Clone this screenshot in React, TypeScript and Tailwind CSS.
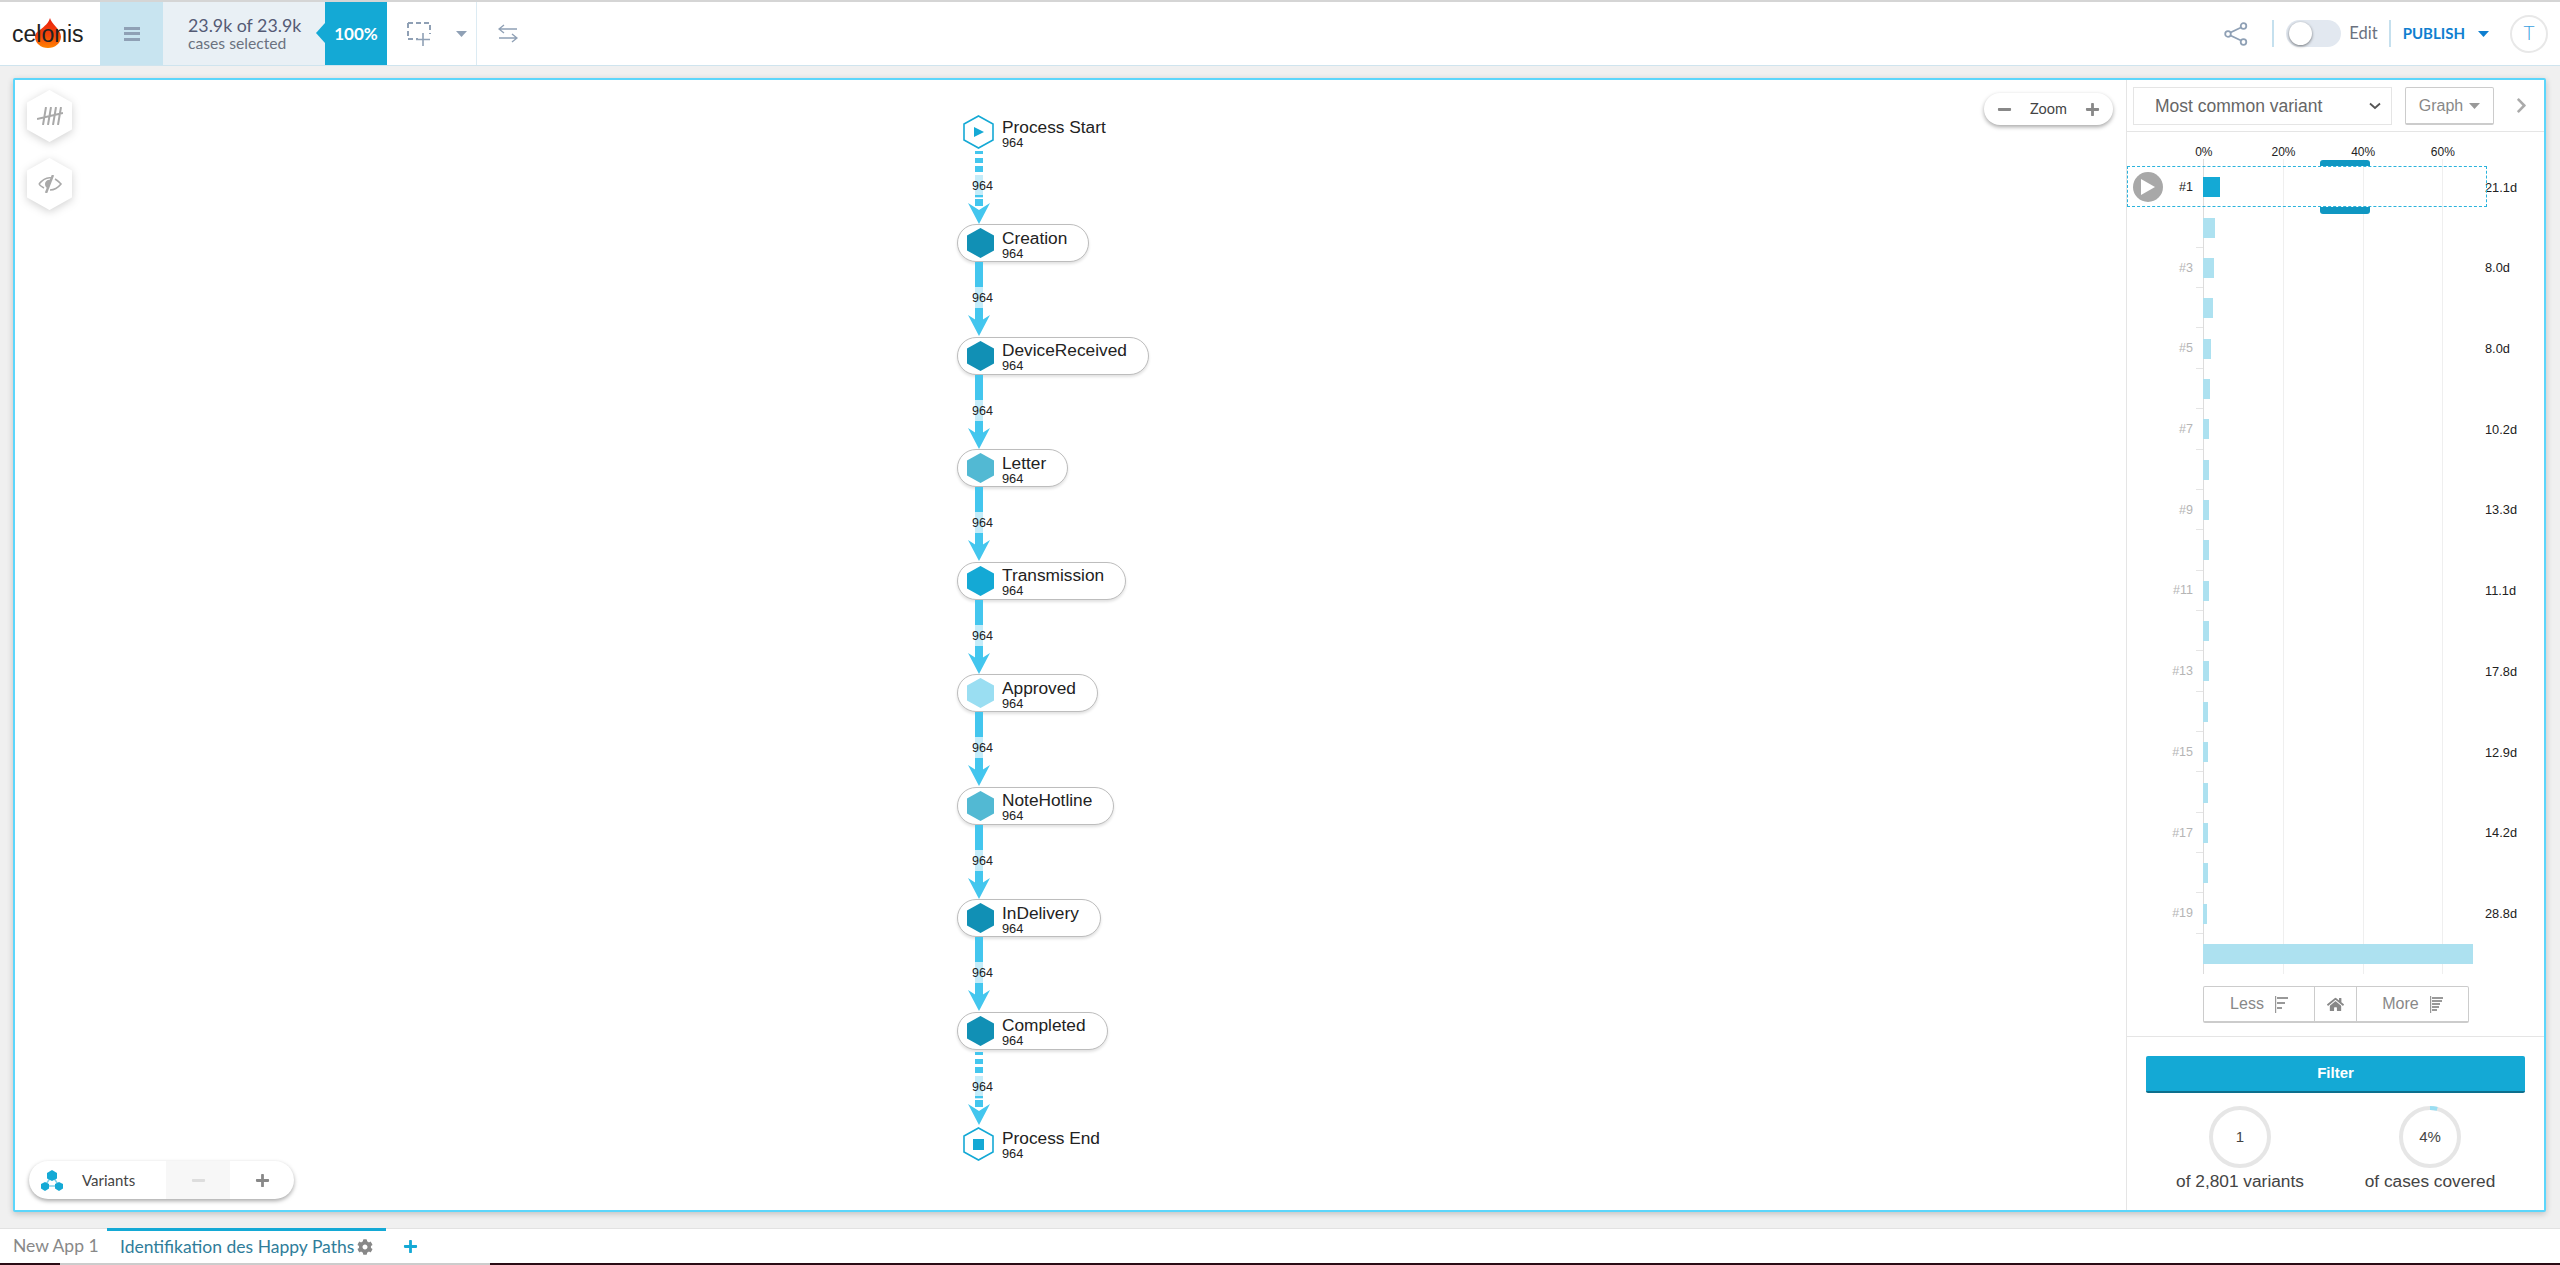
import { FaChevronRight, FaCog, FaHome, FaMinus, FaPlus } from "react-icons/fa";

const hexPoints = "13.5,0 27,7.5 27,22.5 13.5,30 0,22.5 0,7.5";

const steps = [
  { name: "Creation", color: "#1190b5" },
  { name: "DeviceReceived", color: "#1190b5" },
  { name: "Letter", color: "#52b9d3" },
  { name: "Transmission", color: "#14a9d5" },
  { name: "Approved", color: "#9adef2" },
  { name: "NoteHotline", color: "#52b9d3" },
  { name: "InDelivery", color: "#1190b5" },
  { name: "Completed", color: "#1190b5" },
];

const bars = [17, 12, 11, 10, 8, 7, 6, 6, 6, 6, 6, 6, 6, 5, 5, 5, 5, 5, 4, 270];
const durations: Record<number, string> = {
  1: "21.1d",
  3: "8.0d",
  5: "8.0d",
  7: "10.2d",
  9: "13.3d",
  11: "11.1d",
  13: "17.8d",
  15: "12.9d",
  17: "14.2d",
  19: "28.8d",
};

function Edge(props: { dashed?: boolean; height: string }) {
  return (
    <div className={`relative w-[44px] ${props.height}`}>
      <svg width="44" height="78" className="absolute top-0 left-0">
        {props.dashed ? (
          <>
            <rect x="18" y="2" width="8" height="3" fill="#43c6ee" />
            <rect x="18" y="9" width="8" height="5" fill="#43c6ee" />
            <rect x="18" y="17" width="8" height="6" fill="#43c6ee" />
            <rect x="18" y="26" width="8" height="23" fill="#c5ecf9" />
            <rect x="18" y="46" width="8" height="2" fill="#43c6ee" />
            <rect x="18" y="50" width="8" height="7" fill="#43c6ee" />
            <polygon points="11,54 22,61 33,54 22,75" fill="#43c6ee" />
          </>
        ) : (
          <>
            <rect x="18" y="0" width="8" height="60" fill="#43c6ee" />
            <rect x="18" y="25" width="8" height="21" fill="#c5ecf9" />
            <polygon points="11,53 22,60 33,53 22,74" fill="#43c6ee" />
          </>
        )}
      </svg>
      <span
        className={`absolute left-[15px] text-[12.5px] leading-[14px] text-[#222] ${
          props.dashed ? "top-[30px]" : "top-[29px]"
        }`}
      >
        964
      </span>
    </div>
  );
}

function NodeLabel(props: { name: string }) {
  return (
    <div className="ml-[8px] flex flex-col">
      <span className="text-[17.3px] leading-[18px] text-[#222]">{props.name}</span>
      <span className="mt-[1px] h-[10px] text-[12.8px] leading-[12px] text-[#222]">964</span>
    </div>
  );
}

function StepNode(props: { name: string; color: string }) {
  return (
    <div className="flex h-[38px] w-fit items-center rounded-full border border-[#bdbdbd] bg-white pl-[9px] pr-[21px] shadow-[0_2px_3px_rgba(0,0,0,0.12)]">
      <svg width="27" height="30" viewBox="0 0 27 30">
        <polygon points={hexPoints} fill={props.color} />
      </svg>
      <NodeLabel name={props.name} />
    </div>
  );
}

function ProcessNode(props: { name: string; end?: boolean }) {
  return (
    <div className="ml-[6px] flex h-[34px] items-center">
      <svg width="31" height="34" viewBox="0 0 31 34">
        <polygon
          points="15.5,1 30,9 30,25 15.5,33 1,25 1,9"
          fill="white"
          stroke="#14a9d5"
          strokeWidth="1.6"
        />
        {props.end ? (
          <rect x="10" y="12" width="11" height="11" fill="#14a9d5" />
        ) : (
          <polygon points="11,12 21,17 11,22" fill="#14a9d5" />
        )}
      </svg>
      <NodeLabel name={props.name} />
    </div>
  );
}

function HexButton(props: { children: React.ReactNode }) {
  return (
    <div className="relative h-[52px] w-[45px] drop-shadow-[0_2px_4px_rgba(0,0,0,0.18)]">
      <svg width="45" height="52" viewBox="0 0 45 52" className="absolute inset-0">
        <polygon
          points="22.5,1 44,13 44,39 22.5,51 1,39 1,13"
          fill="white"
          stroke="white"
          strokeWidth="2"
          strokeLinejoin="round"
        />
      </svg>
      <div className="absolute inset-0 flex items-center justify-center">{props.children}</div>
    </div>
  );
}

function BarsIcon(props: { more?: boolean }) {
  const widths = props.more ? [11, 10, 8, 7, 5] : [11, 8, 5];
  const gap = props.more ? 3 : 5;
  return (
    <svg width="13" height="17" viewBox="0 0 13 17">
      <rect x="0" y="0" width="1.2" height="17" fill="#999" />
      {widths.map((w, i) => (
        <rect key={i} x="2" y={1 + i * gap} width={w} height="2" fill="#999" />
      ))}
    </svg>
  );
}

function Ring(props: { value: string; caption: string; arc?: boolean }) {
  return (
    <div className="flex w-[190px] flex-col items-center">
      <div className="relative h-[64px] w-[64px]">
        <svg width="64" height="64" viewBox="0 0 64 64">
          <circle cx="32" cy="32" r="29" fill="none" stroke="#e6e6e6" strokeWidth="4" />
          {props.arc && (
            <circle
              cx="32"
              cy="32"
              r="29"
              fill="none"
              stroke="#9adef2"
              strokeWidth="4"
              strokeDasharray="7.3 175"
              transform="rotate(-90 32 32)"
            />
          )}
        </svg>
        <span className="absolute inset-0 flex items-center justify-center text-[15px] text-[#444]">
          {props.value}
        </span>
      </div>
      <span className="text-[17.3px] leading-[24px] text-[#444]">{props.caption}</span>
    </div>
  );
}

function Sidebar() {
  return (
    <div className="flex w-[418px] shrink-0 flex-col border-l border-[#e5e5e5]">
      <div className="flex h-[52px] items-start border-b border-[#e5e5e5] pt-[7px]">
        <div className="ml-[6px] flex h-[38px] w-[259px] items-center justify-between border border-[#e5e5e5] pl-[21px] pr-[10px] text-[17.5px] text-[#666]">
          Most common variant
          <svg width="12" height="8" viewBox="0 0 12 8">
            <path d="M1 1.5 L6 6 L11 1.5" fill="none" stroke="#555" strokeWidth="1.8" />
          </svg>
        </div>
        <div className="ml-[13px] flex h-[38px] w-[89px] items-center justify-center gap-[6px] rounded-[2px] border border-b-2 border-[#ccc] text-[16px] text-[#888]">
          Graph
          <svg width="11" height="6" viewBox="0 0 11 6">
            <polygon points="0,0 11,0 5.5,6" fill="#999" />
          </svg>
        </div>
        <FaChevronRight className="ml-[19px] mt-[10px] text-[17px] text-[#aaa]" />
      </div>

      <div className="relative">
        <div className="flex h-[35px] items-center pl-[37px] pt-[4px] text-[12px] text-[#222]">
          {["0%", "20%", "40%", "60%"].map((tick) => (
            <span key={tick} className="w-[79.67px] text-center">
              {tick}
            </span>
          ))}
        </div>

        {/* grid lines behind the rows */}
        <div className="absolute bottom-0 left-[76px] top-[27px] w-px bg-[#dcdcdc]" />
        <div className="absolute bottom-0 left-[156px] top-[27px] w-px bg-[#efefef]" />
        <div className="absolute bottom-0 left-[236px] top-[27px] w-px bg-[#efefef]" />
        <div className="absolute bottom-0 left-[315px] top-[27px] w-px bg-[#efefef]" />

        <div className="relative flex flex-col">
          {bars.map((width, i) => {
            const row = i + 1;
            return (
              <div key={row} className="relative flex h-[40.37px] items-center">
                <div className="w-[76px] pr-[10px] text-right text-[12.5px] text-[#b5b5b5]">
                  {row === 1 ? <span className="text-[#222]">#1</span> : row % 2 === 1 ? `#${row}` : ""}
                </div>
                <div className="w-[282px]">
                  <div
                    className={`h-[20px] ${row === 1 ? "bg-[#14a9d5]" : "bg-[#ade1f0]"}`}
                    style={{ width }}
                  />
                </div>
                <span className="text-[12.8px] text-[#222]">{durations[row]}</span>
                {row > 1 && row < 20 && (
                  <div className="absolute bottom-0 left-[69px] h-px w-[7px] bg-[#e5e5e5]" />
                )}
              </div>
            );
          })}

          {/* highlighted first row */}
          <div className="absolute left-0 top-[-1px] h-[41px] w-[360px] border border-dashed border-[#2bb3dc]" />
          <div className="absolute left-[193px] top-[-7px] h-[6px] w-[50px] rounded-t-[3px] bg-[#1097c2]" />
          <div className="absolute left-[193px] top-[40px] h-[7px] w-[50px] rounded-b-[3px] bg-[#1097c2]" />
          <div className="absolute left-[6px] top-[5px] flex h-[30px] w-[30px] items-center justify-center rounded-full bg-[#a8a8a8]">
            <svg width="14" height="16" viewBox="0 0 14 16">
              <polygon points="0,0 14,8 0,16" fill="white" />
            </svg>
          </div>
        </div>
      </div>

      <div className="ml-[76px] mt-[12px] flex h-[37px] w-[266px] rounded-[2px] border border-b-2 border-[#ccc] text-[16px] text-[#888]">
        <div className="flex w-[110px] items-center justify-center gap-[11px]">
          Less
          <BarsIcon />
        </div>
        <div className="flex w-[43px] items-center justify-center border-x border-[#ccc]">
          <FaHome className="text-[17px] text-[#888]" />
        </div>
        <div className="flex flex-1 items-center justify-center gap-[11px]">
          More
          <BarsIcon more />
        </div>
      </div>

      <div className="mt-[13px] flex flex-1 flex-col border-t border-[#e5e5e5] pt-[19px]">
        <div className="mx-[19px] flex h-[37px] items-center justify-center rounded-[2px] border-b-2 border-[#0d6f8d] bg-[#14a9d5] text-[15px] font-bold text-white">
          Filter
        </div>
        <div className="ml-[18px] mt-[12px] flex">
          <Ring value="1" caption="of 2,801 variants" />
          <Ring value="4%" caption="of cases covered" arc />
        </div>
      </div>
    </div>
  );
}

function GraphArea() {
  return (
    <div className="relative flex-1 pl-[942px] pt-[35px]">
      <ProcessNode name="Process Start" />
      <Edge dashed height="h-[75px]" />
      {steps.map((step, i) => (
        <div key={step.name}>
          <StepNode name={step.name} color={step.color} />
          {i < steps.length - 1 ? <Edge height="h-[74.57px]" /> : <Edge dashed height="h-[77px]" />}
        </div>
      ))}
      <ProcessNode name="Process End" end />

      <div className="absolute left-[12px] top-[10px] flex flex-col gap-[16px]">
        <HexButton>
          <svg width="26" height="18" viewBox="0 0 26 18" fill="none" stroke="#a9a9a9" strokeWidth="2">
            <path d="M9 0 L6 18 M14 0 L11 18 M19 0 L16 18 M24 0 L21 18 M0 12 L26 6" />
          </svg>
        </HexButton>
        <HexButton>
          <svg width="24" height="18" viewBox="0 0 24 18" fill="none" stroke="#a9a9a9" strokeWidth="1.6">
            <path d="M1 9 C5 4 10 2 14 3 M17 4 C19 5 21 7 23 9 C19 14 15 15 12 15 M6 13 C4 12 2 11 1 9" />
            <path d="M15 0 L8 18" strokeWidth="2.4" />
            <path d="M7 9 C7 6 10 4 13 5 L10 13 C8 13 7 11 7 9 Z" fill="#a9a9a9" stroke="none" />
          </svg>
        </HexButton>
      </div>

      <div className="absolute left-[1969px] top-[13px] flex h-[32px] w-[129px] items-center justify-between rounded-full bg-white px-[13px] font-['Lato'] text-[14.5px] text-[#444] shadow-[0_2px_4px_rgba(0,0,0,0.35)]">
        <FaMinus className="text-[15px] text-[#888]" />
        Zoom
        <FaPlus className="text-[15px] text-[#888]" />
      </div>

      <div className="absolute left-[14px] top-[1081px] flex h-[38px] w-[265px] items-center overflow-hidden rounded-full bg-white font-['Lato'] text-[15px] text-[#444] shadow-[0_2px_4px_rgba(0,0,0,0.35)]">
        <svg width="22" height="21" viewBox="0 0 22 21" className="ml-[12px]">
          <path d="M11 5 L4 16 L18 16 Z" fill="none" stroke="#7fd0ea" strokeWidth="1.5" />
          <polygon points="11,0 16,3 16,8.5 11,11 6,8.5 6,3" fill="#14a9d5" />
          <polygon points="4,12 8,14 8,18.5 4,21 0,18.5 0,14" fill="#14a9d5" />
          <polygon points="18,12 22,14 22,18.5 18,21 14,18.5 14,14" fill="#14a9d5" />
        </svg>
        <span className="ml-[19px] w-[84px]">Variants</span>
        <div className="flex h-full w-[64px] items-center justify-center bg-[#f7f7f7]">
          <FaMinus className="text-[15px] text-[#ddd]" />
        </div>
        <div className="flex h-full flex-1 items-center justify-center">
          <FaPlus className="text-[15px] text-[#888]" />
        </div>
      </div>
    </div>
  );
}

function TopBar() {
  return (
    <div className="flex h-[64px] shrink-0 items-stretch border-b border-[#cfe4ee] bg-white font-['Lato']">
      <div className="relative w-[100px]">
        <svg width="26" height="30" viewBox="0 0 26 32" preserveAspectRatio="none" className="absolute left-[35px] top-[16px]">
          <defs>
            <linearGradient id="flame" x1="0" y1="0" x2="0" y2="1">
              <stop offset="0" stopColor="#e8200c" />
              <stop offset="0.6" stopColor="#f6480a" />
              <stop offset="1" stopColor="#ff8400" />
            </linearGradient>
          </defs>
          <path d="M15 0 C16 6 26 12 26 20 C26 27 20 32 13 32 C6 32 0 27 0 20 C0 15 5 13 8 10 C11 7 13 6 15 0 Z" fill="url(#flame)" />
        </svg>
        <span className="absolute left-[12px] top-[18px] font-['Liberation_Sans'] text-[23px] leading-[28px] text-[#222]">
          celonis
        </span>
      </div>
      <div className="flex w-[63px] flex-col items-center justify-center gap-[2.5px] bg-[#c8e4f0]">
        <div className="h-[3px] w-[16px] bg-[#8fa0b5]" />
        <div className="h-[3px] w-[16px] bg-[#8fa0b5]" />
        <div className="h-[3px] w-[16px] bg-[#8fa0b5]" />
      </div>
      <div className="flex w-[162px] flex-col justify-center bg-[#e9f0f5] pl-[25px]">
        <span className="text-[17.8px] leading-[19px] text-[#555b75]">23.9k of 23.9k</span>
        <span className="text-[15.7px] leading-[17px] text-[#6b7280]">cases selected</span>
      </div>
      <div className="relative flex w-[62px] items-center justify-center bg-[#14a9d5] text-[17px] font-bold text-white">
        <div className="absolute left-[-9px] top-[21px] h-0 w-0 border-y-[10px] border-r-[9px] border-y-transparent border-r-[#14a9d5]" />
        100%
      </div>
      <div className="flex w-[90px] items-center border-r border-[#dcebf3] pl-[20px]">
        <svg width="24" height="24" viewBox="0 0 24 24" fill="none" stroke="#8fa0b5" strokeWidth="2">
          <path d="M1 1 H23 V12 M1 1 V17 H11" strokeDasharray="5 3" />
          <path d="M16 11 V24 M9 17.5 H23" strokeWidth="1.6" />
        </svg>
        <svg width="11" height="6" viewBox="0 0 11 6" className="ml-[25px]">
          <polygon points="0,0 11,0 5.5,6" fill="#8fa0b5" />
        </svg>
      </div>
      <div className="flex flex-1 items-center pl-[21px]">
        <svg width="20" height="19" viewBox="0 0 20 19" fill="none" stroke="#8fa0b5" strokeWidth="1.4">
          <path d="M6 1 L1 5 L6 9 M1 5 H19 M14 10 L19 14 L14 18 M19 14 H1" />
        </svg>
      </div>
      <div className="flex items-center">
        <svg width="24" height="24" viewBox="0 0 24 24" fill="none" stroke="#8fa0b5" strokeWidth="1.8">
          <circle cx="4" cy="12" r="2.8" />
          <circle cx="19.5" cy="4" r="2.8" />
          <circle cx="19.5" cy="20" r="2.8" />
          <path d="M6.5 10.5 L17 5.5 M6.5 13.5 L17 18.5" />
        </svg>
        <div className="ml-[24px] h-[27px] w-[2px] bg-[#c5e0ee]" />
        <div className="ml-[12px] flex h-[27px] w-[55px] items-center rounded-full bg-[#e2e8f0] pl-[3px]">
          <div className="h-[23px] w-[23px] rounded-full bg-white shadow-[0_1px_3px_rgba(0,0,0,0.5)]" />
        </div>
        <span className="ml-[8px] text-[16.5px] text-[#6b7280]">Edit</span>
        <div className="ml-[11px] h-[27px] w-[2px] bg-[#c5e0ee]" />
        <span className="ml-[12px] text-[15px] font-bold text-[#0f7fd0]">PUBLISH</span>
        <svg width="11" height="6" viewBox="0 0 11 6" className="ml-[13px]">
          <polygon points="0,0 11,0 5.5,6" fill="#0f7fd0" />
        </svg>
        <div className="ml-[21px] mr-[12px] flex h-[38px] w-[38px] items-center justify-center rounded-full border-2 border-[#e8e8e8] text-[19px] font-light text-[#3b9fe0]">
          T
        </div>
      </div>
    </div>
  );
}

export default function App() {
  return (
    <div className="flex h-screen w-full flex-col overflow-hidden bg-[#f0f0f0] font-['Liberation_Sans',Arial,sans-serif]">
      <div className="h-[2px] shrink-0 bg-[#d5d5d5]" />
      <TopBar />
      <div className="flex-1 px-[13px] pt-[12px]">
        <div className="flex h-[1134px] w-[2533px] rounded-[2px] border-2 border-[#5cd6fb] bg-white shadow-[0_2px_6px_rgba(0,0,0,0.2)]">
          <GraphArea />
          <Sidebar />
        </div>
      </div>
      <div className="flex h-[35px] shrink-0 items-stretch border-t border-[#e2e2e2] bg-white font-['Lato'] text-[17.5px]">
        <div className="flex w-[107px] items-center pl-[13px] text-[#888]">New App 1</div>
        <div className="-mt-px flex w-[279px] items-center border-t-[3px] border-[#14a9d5] pl-[13px] text-[#2f7d9a]">
          Identifikation des Happy Paths
          <FaCog className="ml-[3px] text-[16px] text-[#888]" />
        </div>
        <div className="flex items-center pl-[17px]">
          <FaPlus className="text-[15px] text-[#14a9d5]" />
        </div>
      </div>
      <div className="flex h-[2px] shrink-0">
        <div className="w-[60px] bg-[#2a0c15]" />
        <div className="w-[430px] bg-[#cccccc]" />
        <div className="flex-1 bg-[#2a0c15]" />
      </div>
    </div>
  );
}
